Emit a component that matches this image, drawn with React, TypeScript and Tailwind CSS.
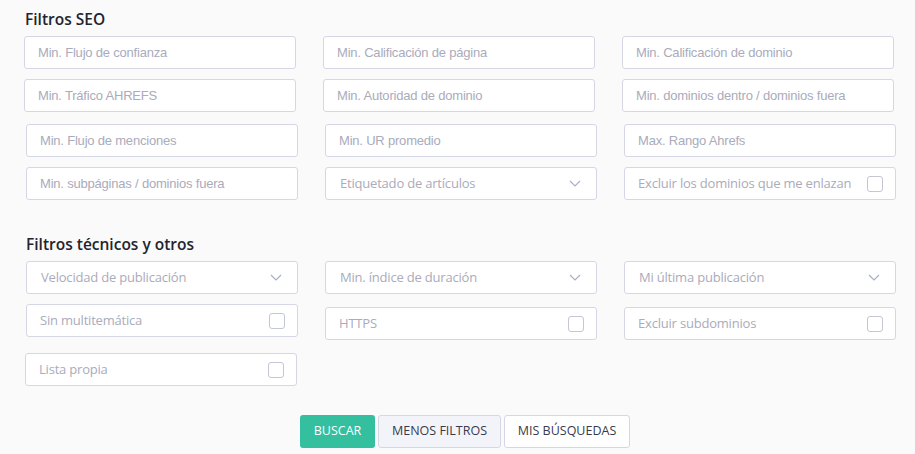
import React from 'react';

const arial = { fontFamily: '"Liberation Sans", Arial, sans-serif' };

function TextField({ label, shift = '' }: { label: string; shift?: string }) {
  return (
    <div className={`h-[33px] w-[272px] bg-white border border-[#d6d7e4] rounded-[3px] flex items-center px-[13px] ${shift}`}>
      <span style={arial} className="text-[13px] tracking-[-0.2px] text-[#aaabbb] whitespace-nowrap">{label}</span>
    </div>
  );
}

function SelectField({ label }: { label: string }) {
  return (
    <div className="h-[33px] w-[272px] bg-white border border-[#d6d7e4] rounded-[3px] flex items-center justify-between pl-[14px] pr-[15px]">
      <span className="text-[13px] tracking-[-0.2px] text-[#aaabbb] whitespace-nowrap">{label}</span>
      <svg width="12" height="7" viewBox="0 0 12 7" fill="none">
        <path d="M1 1l5 5 5-5" stroke="#a9aec8" strokeWidth="1.2" />
      </svg>
    </div>
  );
}

function CheckField({ label, shift = '' }: { label: string; shift?: string }) {
  return (
    <div className={`h-[33px] w-[272px] bg-white border border-[#d6d7e4] rounded-[3px] flex items-center justify-between pl-[13px] pr-[12px] ${shift}`}>
      <span className="text-[13px] tracking-[-0.2px] text-[#aaabbb] whitespace-nowrap">{label}</span>
      <span className="w-[16px] h-[16px] rounded-[3px] border border-[#c4c6d4] bg-white shrink-0" />
    </div>
  );
}

export default function App() {
  return (
    <div
      className="w-[915px] h-[454px] bg-[#fafafa] overflow-hidden"
      style={{ fontFamily: '"Open Sans", sans-serif' }}
    >
      <h2 className="pl-[25px] pt-[7px] text-[15.5px] leading-[24px] font-semibold text-[#23242e]">Filtros SEO</h2>

      <div className="flex gap-[27px] pl-[24px] mt-[5px]">
        <TextField label="Min. Flujo de confianza" />
        <TextField label="Min. Calificación de página" />
        <TextField label="Min. Calificación de dominio" />
      </div>
      <div className="flex gap-[27px] pl-[24px] mt-[10px]">
        <TextField label="Min. Tráfico AHREFS" />
        <TextField label="Min. Autoridad de dominio" />
        <TextField label="Min. dominios dentro / dominios fuera" />
      </div>
      <div className="flex gap-[27px] pl-[26px] mt-[12px]">
        <TextField label="Min. Flujo de menciones" />
        <TextField label="Min. UR promedio" />
        <TextField label="Max. Rango Ahrefs" />
      </div>
      <div className="flex gap-[27px] pl-[26px] mt-[10px]">
        <TextField label="Min. subpáginas / dominios fuera" />
        <SelectField label="Etiquetado de artículos" />
        <CheckField label="Excluir los dominios que me enlazan" />
      </div>

      <h2 className="pl-[26px] mt-[32px] text-[15.5px] leading-[24px] font-semibold text-[#23242e]">Filtros técnicos y otros</h2>

      <div className="flex gap-[27px] pl-[26px] mt-[5px]">
        <SelectField label="Velocidad de publicación" />
        <SelectField label="Min. índice de duración" />
        <SelectField label="Mi última publicación" />
      </div>
      <div className="flex items-start gap-[27px] pl-[26px] mt-[10px]">
        <CheckField label="Sin multitemática" />
        <CheckField label="HTTPS" shift="mt-[3px]" />
        <CheckField label="Excluir subdominios" shift="mt-[3px]" />
      </div>
      <div className="flex pl-[25px] mt-[13px]">
        <CheckField label="Lista propia" />
      </div>

      <div className="flex justify-center gap-[3px] mt-[29px] pl-[15px]">
        <button className="h-[33px] w-[75px] rounded-[3px] bg-[#34bf9e] text-white text-[12.5px]">BUSCAR</button>
        <button className="h-[33px] w-[123px] rounded-[3px] bg-[#f3f4f9] border border-[#d6d7e4] text-[#383a4c] text-[12.5px]">MENOS FILTROS</button>
        <button className="h-[33px] w-[126px] rounded-[3px] bg-white border border-[#d6d7e4] text-[#383a4c] text-[12.5px]">MIS BÚSQUEDAS</button>
      </div>
    </div>
  );
}
